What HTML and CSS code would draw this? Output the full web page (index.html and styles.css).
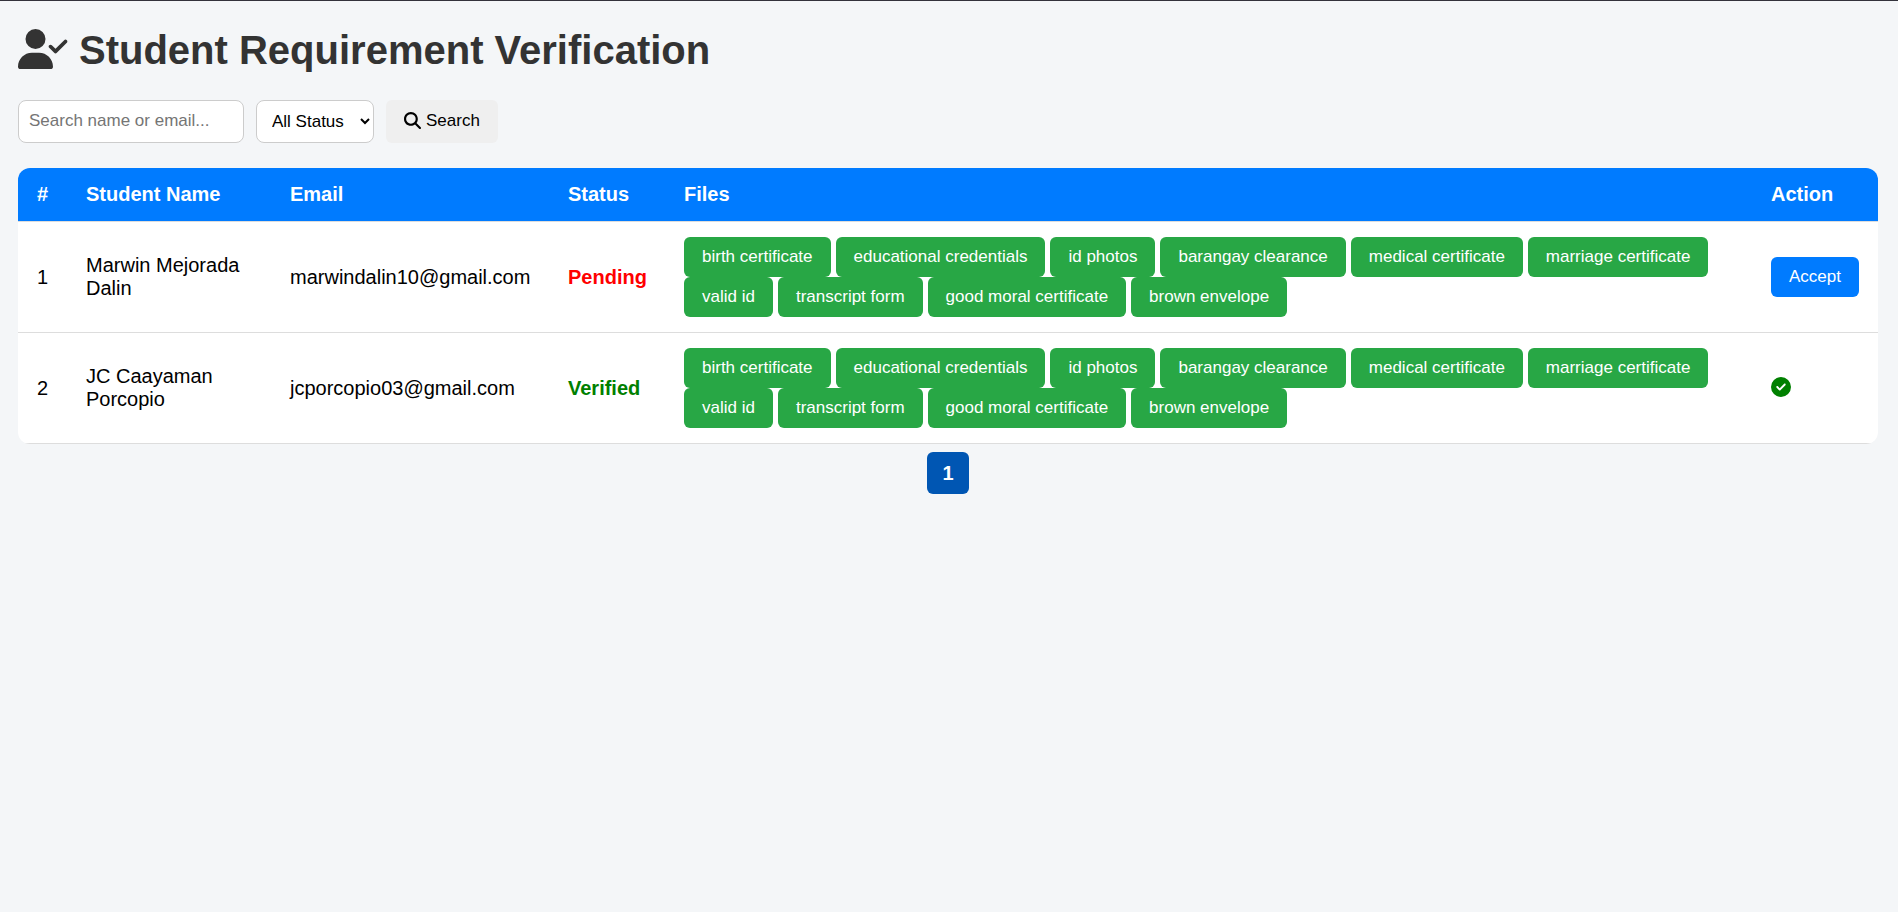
FILE: index.html
```html
<!DOCTYPE html>
<html lang="en">
<head>
<meta charset="utf-8">
<title>Student Requirement Verification</title>
<link rel="stylesheet" href="styles.css">
</head>
<body>
<main class="page">
  <h1 class="title">
    <svg class="title-icon" viewBox="0 0 640 512" aria-hidden="true"><path d="M96 128a128 128 0 1 1 256 0A128 128 0 1 1 96 128zM0 482.300C0 383.800 79.800 304 178.300 304h91.400C368.200 304 448 383.800 448 482.300c0 16.400-13.300 29.700-29.700 29.700H29.700C13.300 512 0 498.700 0 482.300zM625 177L497 305c-9.400 9.400-24.600 9.400-33.900 0l-64-64c-9.400-9.400-9.400-24.600 0-33.900s24.600-9.400 33.900 0l47 47L591 143c9.400-9.400 24.600-9.400 33.900 0s9.400 24.600 0 33.900z"/></svg>
    Student Requirement Verification
  </h1>

  <form class="filters">
    <input class="field search-field" type="text" placeholder="Search name or email..." aria-label="Search name or email">
    <select class="field status-field" aria-label="Status">
      <option>All Status</option>
      <option>Pending</option>
      <option>Verified</option>
    </select>
    <button class="search-button" type="button">
      <svg class="search-icon" viewBox="0 0 512 512" aria-hidden="true"><path d="M416 208c0 45.900-14.900 88.300-40 122.700L502.600 457.400c12.500 12.500 12.500 32.800 0 45.300s-32.800 12.500-45.300 0L330.700 376c-34.400 25.200-76.800 40-122.700 40C93.100 416 0 322.900 0 208S93.100 0 208 0S416 93.100 416 208zM208 352a144 144 0 1 0 0-288 144 144 0 1 0 0 288z"/></svg>
      Search
    </button>
  </form>

  <table class="students">
    <colgroup>
      <col class="col-number"><col class="col-name"><col class="col-email"><col class="col-status"><col><col class="col-action">
    </colgroup>
    <thead>
      <tr><th>#</th><th>Student Name</th><th>Email</th><th>Status</th><th>Files</th><th>Action</th></tr>
    </thead>
    <tbody>
      <tr>
        <td>1</td>
        <td>Marwin Mejorada Dalin</td>
        <td>marwindalin10@gmail.com</td>
        <td class="status pending">Pending</td>
        <td>
          <div class="files">
            <button class="button file" type="button">birth certificate</button>
            <button class="button file" type="button">educational credentials</button>
            <button class="button file" type="button">id photos</button>
            <button class="button file" type="button">barangay clearance</button>
            <button class="button file" type="button">medical certificate</button>
            <button class="button file" type="button">marriage certificate</button>
            <button class="button file" type="button">valid id</button>
            <button class="button file" type="button">transcript form</button>
            <button class="button file" type="button">good moral certificate</button>
            <button class="button file" type="button">brown envelope</button>
          </div>
        </td>
        <td><button class="button accept" type="button">Accept</button></td>
      </tr>
      <tr>
        <td>2</td>
        <td>JC Caayaman Porcopio</td>
        <td>jcporcopio03@gmail.com</td>
        <td class="status verified">Verified</td>
        <td>
          <div class="files">
            <button class="button file" type="button">birth certificate</button>
            <button class="button file" type="button">educational credentials</button>
            <button class="button file" type="button">id photos</button>
            <button class="button file" type="button">barangay clearance</button>
            <button class="button file" type="button">medical certificate</button>
            <button class="button file" type="button">marriage certificate</button>
            <button class="button file" type="button">valid id</button>
            <button class="button file" type="button">transcript form</button>
            <button class="button file" type="button">good moral certificate</button>
            <button class="button file" type="button">brown envelope</button>
          </div>
        </td>
        <td><svg class="done-icon" viewBox="0 0 512 512" role="img" aria-label="Verified"><path d="M256 512A256 256 0 1 0 256 0a256 256 0 1 0 0 512zM369 209L241 337c-9.400 9.400-24.600 9.400-33.900 0l-64-64c-9.400-9.400-9.400-24.600 0-33.900s24.600-9.400 33.900 0l47 47L335 175c9.400-9.400 24.600-9.400 33.900 0s9.400 24.600 0 33.900z"/></svg></td>
      </tr>
    </tbody>
  </table>

  <nav class="pagination" aria-label="Pages">
    <a class="page-link" href="#" aria-current="page">1</a>
  </nav>
</main>
</body>
</html>
```

FILE: styles.css
```css
* {
  box-sizing: border-box;
}

body {
  margin: 0;
  border-top: 1px solid #33323b;
  background: #f4f6f8;
  color: #000;
  font-family: "Liberation Sans", Arial, sans-serif;
  font-size: 20px;
}

button,
input,
select {
  font-family: inherit;
  font-size: 17px;
}

.page {
  padding: 26px 20px 20px 18px;
}

.title {
  display: flex;
  align-items: center;
  gap: 11px;
  margin: 0 0 27px;
  color: #333;
  font-size: 40px;
  line-height: 46px;
}

.title-icon {
  width: 50px;
  height: 40px;
  margin-bottom: 2px;
  fill: currentColor;
}

.filters {
  display: flex;
  gap: 12px;
  margin-bottom: 25px;
}

.field {
  height: 43px;
  border: 1px solid #ccc;
  border-radius: 8px;
  background: #fff;
  color: #000;
}

.search-field {
  width: 226px;
  padding: 0 10px 2px;
}

.search-field::placeholder {
  color: #757575;
}

.status-field {
  width: 118px;
  padding: 0 0 0 11px;
}

.search-button {
  display: flex;
  align-items: center;
  gap: 5px;
  height: 43px;
  padding: 0 18px 2px;
  border: 0;
  border-radius: 6px;
  background: #efefef;
  color: #000;
}

.search-icon {
  width: 17px;
  height: 17px;
  fill: currentColor;
}

.students {
  width: 100%;
  border-spacing: 0;
  border-radius: 12px;
  background: #fff;
  overflow: hidden;
  table-layout: fixed;
}

.col-number { width: 49px; }
.col-name { width: 204px; }
.col-email { width: 278px; }
.col-status { width: 116px; }
.col-action { width: 126px; }

.students th,
.students td {
  padding: 15px 19px;
  border-bottom: 1px solid #ddd;
  line-height: 23px;
  text-align: left;
}

.students th {
  background: #007bff;
  background-clip: padding-box;
  color: #fff;
}

.status {
  font-weight: bold;
}

.pending { color: #f00; }
.verified { color: #008000; }

.files {
  display: flex;
  flex-wrap: wrap;
  column-gap: 5px;
}

.button {
  height: 40px;
  padding: 0 18px;
  border: 0;
  border-radius: 6px;
  color: #fff;
  white-space: nowrap;
}

.file { background: #28a745; }
.accept { background: #007bff; }

.done-icon {
  display: block;
  width: 20px;
  height: 20px;
  margin-bottom: 3px;
  fill: #008000;
}

.pagination {
  display: flex;
  justify-content: center;
  margin-top: 8px;
}

.page-link {
  min-width: 42px;
  padding: 10px;
  border-radius: 6px;
  background: #0056b3;
  color: #fff;
  font-weight: bold;
  line-height: 22px;
  text-align: center;
  text-decoration: none;
}
```
